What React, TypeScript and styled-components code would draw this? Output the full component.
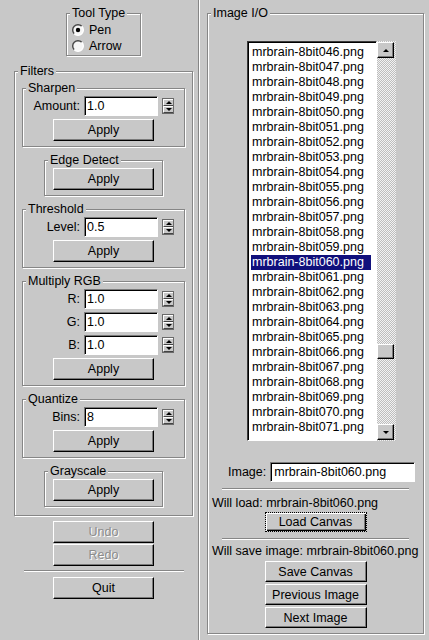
import React from 'react';
import styled, { createGlobalStyle, css } from 'styled-components';

const files = Array.from({ length: 26 }, (_, i) => `mrbrain-8bit0${46 + i}.png`);
const selectedFile = 'mrbrain-8bit060.png';

const GlobalStyle = createGlobalStyle`
	html, body {
		margin: 0;
		padding: 0;
	}
	body {
		background: #c8c8c8;
		font-family: "Liberation Sans", Arial, sans-serif;
		font-size: 12.5px;
		color: #000;
	}
`;

export default function App() {
	return (
		<>
			<GlobalStyle />
			<Window>
				<LeftColumn>
					<ToolTypeBox>
						<GroupTitle>Tool Type</GroupTitle>
						<RadioRow>
							<Radio checked />
							Pen
						</RadioRow>
						<RadioRow>
							<Radio />
							Arrow
						</RadioRow>
					</ToolTypeBox>

					<FiltersBox>
						<GroupTitle>Filters</GroupTitle>
						<SubGroup>
							<GroupTitle>Sharpen</GroupTitle>
							<SpinField label="Amount:" value="1.0" />
							<PushButton>Apply</PushButton>
						</SubGroup>
						<SubGroup $narrow>
							<GroupTitle>Edge Detect</GroupTitle>
							<PushButton>Apply</PushButton>
						</SubGroup>
						<SubGroup>
							<GroupTitle>Threshold</GroupTitle>
							<SpinField label="Level:" value="0.5" />
							<PushButton>Apply</PushButton>
						</SubGroup>
						<SubGroup>
							<GroupTitle>Multiply RGB</GroupTitle>
							<SpinField label="R:" value="1.0" />
							<SpinField label="G:" value="1.0" />
							<SpinField label="B:" value="1.0" />
							<PushButton>Apply</PushButton>
						</SubGroup>
						<SubGroup>
							<GroupTitle>Quantize</GroupTitle>
							<SpinField label="Bins:" value="8" />
							<PushButton>Apply</PushButton>
						</SubGroup>
						<SubGroup $narrow>
							<GroupTitle>Grayscale</GroupTitle>
							<PushButton>Apply</PushButton>
						</SubGroup>
					</FiltersBox>

					<ButtonStack>
						<PushButton $disabled>Undo</PushButton>
						<PushButton $disabled>Redo</PushButton>
					</ButtonStack>
					<Rule $w={160} $mt={4} />
					<QuitButton>Quit</QuitButton>
				</LeftColumn>

				<Divider />

				<RightColumn>
					<ImageIOBox>
						<GroupTitle>Image I/O</GroupTitle>
						<ListArea>
							<ListBox>
								{files.map((f) => (
									<ListItem key={f} $selected={f === selectedFile}>
										{f}
									</ListItem>
								))}
							</ListBox>
							<ScrollTrack>
								<ScrollButton>
									<Arrow $dir="up" />
								</ScrollButton>
								<ScrollThumb />
								<ScrollButton>
									<Arrow $dir="down" />
								</ScrollButton>
							</ScrollTrack>
						</ListArea>

						<ImageRow>
							<span>Image:</span>
							<NameField readOnly value={selectedFile} />
						</ImageRow>
						<Rule $w={187} $mt={6} />
						<InfoText $mt={6}>Will load: {selectedFile}</InfoText>
						<LoadButton $w={102} $h={20} $focus>
							Load Canvas
						</LoadButton>
						<Rule $w={187} $mt={6} />
						<InfoText $mt={4}>Will save image: {selectedFile}</InfoText>
						<RightButtons>
							<PushButton $w={102} $h={21}>Save Canvas</PushButton>
							<PushButton $w={102} $h={21}>Previous Image</PushButton>
							<PushButton $w={102} $h={21}>Next Image</PushButton>
						</RightButtons>
					</ImageIOBox>
				</RightColumn>
			</Window>
		</>
	);
}

function Radio({ checked = false }: { checked?: boolean }) {
	return (
		<svg width="12" height="12" viewBox="0 0 12 12">
			<circle cx="6" cy="6" r="5.3" fill="#f6f6f6" />
			<path d="M2.25 9.75 A5.3 5.3 0 0 1 9.75 2.25" stroke="#4a4a4a" strokeWidth="1.4" fill="none" />
			<path d="M9.75 2.25 A5.3 5.3 0 0 1 2.25 9.75" stroke="#ffffff" strokeWidth="1.4" fill="none" />
			{checked && <circle cx="6" cy="6" r="2.2" fill="#000" />}
		</svg>
	);
}

function SpinField({ label, value }: { label: string; value: string }) {
	return (
		<FieldRow>
			<FieldLabel>{label}</FieldLabel>
			<TextField readOnly value={value} />
			<Spinner>
				<SpinHalf>
					<Arrow $dir="up" />
				</SpinHalf>
				<SpinHalf>
					<Arrow $dir="down" />
				</SpinHalf>
			</Spinner>
		</FieldRow>
	);
}

const Window = styled.div`
	display: flex;
	width: 429px;
	height: 640px;
	background: #c8c8c8;
	overflow: hidden;
`;

const LeftColumn = styled.div`
	width: 198px;
	box-sizing: border-box;
	padding: 13px 5px 0 14px;
	display: flex;
	flex-direction: column;
	align-items: center;
`;

const Divider = styled.div`
	width: 0;
	height: 100%;
	border-left: 1px solid #868686;
	border-right: 1px solid #fff;
`;

const RightColumn = styled.div`
	flex: 1;
	padding: 13px 0 0 7px;
`;

const GroupBox = styled.div`
	position: relative;
	box-sizing: border-box;
	display: flex;
	flex-direction: column;
	border: 1px solid #868686;
	box-shadow: inset 1px 1px 0 #fff, 1px 1px 0 #fff;
`;

const GroupTitle = styled.span`
	position: absolute;
	top: -8px;
	left: 3px;
	padding: 0 2px;
	line-height: 14px;
	white-space: nowrap;
	background: #c8c8c8;
`;

const ToolTypeBox = styled(GroupBox)`
	width: 75px;
	padding: 8px 0 1px 5px;
`;

const RadioRow = styled.label`
	display: flex;
	align-items: center;
	gap: 5px;
	height: 16px;
`;

const FiltersBox = styled(GroupBox)`
	width: 179px;
	margin-top: 15px;
	padding: 16px 7px 8px;
	align-items: center;
	gap: 13px;
`;

const SubGroup = styled(GroupBox)<{ $narrow?: boolean }>`
	width: ${(p) => (p.$narrow ? 119 : 163)}px;
	padding: 7px 0 5px;
	align-items: center;
	gap: 3px;
`;

const FieldRow = styled.div`
	align-self: stretch;
	display: grid;
	grid-template-columns: 1fr 74px 12px;
	column-gap: 4px;
	align-items: center;
	padding-right: 10px;
`;

const FieldLabel = styled.span`
	text-align: right;
	white-space: nowrap;
`;

const sunken = css`
	box-sizing: border-box;
	height: 20px;
	margin: 0;
	background: #fff;
	border: 1px solid;
	border-color: #7a7a7a #fff #fff #7a7a7a;
	box-shadow: inset 1px 1px 0 #000;
	font: inherit;
	color: #000;
	outline: none;
`;

const TextField = styled.input`
	${sunken};
	width: 74px;
	padding: 0 0 0 2px;
`;

const NameField = styled.input`
	${sunken};
	width: 145px;
	padding: 0 0 0 3px;
`;

const Spinner = styled.div`
	display: flex;
	flex-direction: column;
	width: 12px;
	height: 16px;
	box-sizing: border-box;
	border: 1px solid #6a6a6a;
	background: #c8c8c8;
`;

const SpinHalf = styled.div`
	flex: 1;
	display: flex;
	align-items: center;
	justify-content: center;
	border-top: 1px solid #fff;
	border-left: 1px solid #fff;
	border-bottom: 1px solid #444;
`;

const Arrow = styled.span<{ $dir: 'up' | 'down' }>`
	width: 0;
	height: 0;
	border-left: 3px solid transparent;
	border-right: 3px solid transparent;
	${(p) => (p.$dir === 'up' ? 'border-bottom: 3px solid #000;' : 'border-top: 3px solid #000;')}
`;

const PushButton = styled.button<{ $w?: number; $h?: number; $disabled?: boolean; $focus?: boolean }>`
	width: ${(p) => p.$w ?? 101}px;
	height: ${(p) => p.$h ?? 22}px;
	box-sizing: border-box;
	padding: 0;
	margin: 0;
	background: #c8c8c8;
	font: inherit;
	white-space: nowrap;
	border: 1px solid;
	border-color: #fff #000 #000 #fff;
	box-shadow: inset -1px -1px 0 #7a7a7a;
	color: ${(p) => (p.$disabled ? '#8c8c8c' : '#000')};
	text-shadow: ${(p) => (p.$disabled ? '1px 1px 0 #fff' : 'none')};
	${(p) =>
		p.$focus &&
		css`
			border: 1px dotted #000;
			box-shadow: inset 1px 1px 0 #fff, inset -1px -1px 0 #000, inset -2px -2px 0 #7a7a7a;
		`}
`;

const ButtonStack = styled.div`
	display: flex;
	flex-direction: column;
	gap: 1px;
	margin-top: 5px;
`;

const QuitButton = styled(PushButton)`
	margin-top: 5px;
`;

const Rule = styled.div<{ $w: number; $mt: number }>`
	width: ${(p) => p.$w}px;
	height: 0;
	margin-top: ${(p) => p.$mt}px;
	align-self: center;
	border-top: 1px solid #868686;
	border-bottom: 1px solid #fff;
`;

const ImageIOBox = styled(GroupBox)`
	width: 217px;
	padding-bottom: 5px;
`;

const ListArea = styled.div`
	display: flex;
	margin: 27px 0 0 39px;
`;

const ListBox = styled.div`
	width: 130px;
	height: 400px;
	box-sizing: border-box;
	padding-top: 3px;
	overflow: hidden;
	background: #fff;
	border: 1px solid;
	border-color: #3a3a3a #fff #fff #3a3a3a;
	box-shadow: inset 1px 1px 0 #000;
`;

const ListItem = styled.div<{ $selected?: boolean }>`
	width: 120px;
	height: 15px;
	line-height: 15px;
	margin-left: 3px;
	padding-left: 1px;
	box-sizing: border-box;
	white-space: nowrap;
	background: ${(p) => (p.$selected ? '#10107c' : 'transparent')};
	color: ${(p) => (p.$selected ? '#fff' : '#000')};
`;

const ScrollTrack = styled.div`
	position: relative;
	width: 19px;
	height: 400px;
	display: flex;
	flex-direction: column;
	justify-content: space-between;
	padding: 1px 0;
	box-sizing: border-box;
	background: repeating-conic-gradient(#bdbdbd 0 25%, #f2f2f2 0 50%) 0 0 / 2px 2px;
`;

const ScrollButton = styled.div`
	width: 17px;
	height: 16px;
	box-sizing: border-box;
	display: flex;
	align-items: center;
	justify-content: center;
	background: #c8c8c8;
	border: 1px solid;
	border-color: #fff #000 #000 #fff;
	box-shadow: inset -1px -1px 0 #7a7a7a;
`;

const ScrollThumb = styled.div`
	position: absolute;
	top: 303px;
	left: 0;
	width: 17px;
	height: 15px;
	box-sizing: border-box;
	background: #c8c8c8;
	border: 1px solid;
	border-color: #fff #000 #000 #fff;
	box-shadow: inset -1px -1px 0 #7a7a7a;
`;

const ImageRow = styled.div`
	display: flex;
	align-items: center;
	gap: 4px;
	margin: 21px 0 0 20px;
`;

const InfoText = styled.div<{ $mt: number }>`
	margin-top: ${(p) => p.$mt}px;
	padding-left: 4px;
	line-height: 14px;
	white-space: nowrap;
`;

const LoadButton = styled(PushButton)`
	align-self: center;
	margin-top: 2px;
`;

const RightButtons = styled.div`
	display: flex;
	flex-direction: column;
	align-items: center;
	gap: 2px;
	margin-top: 3px;
`;
